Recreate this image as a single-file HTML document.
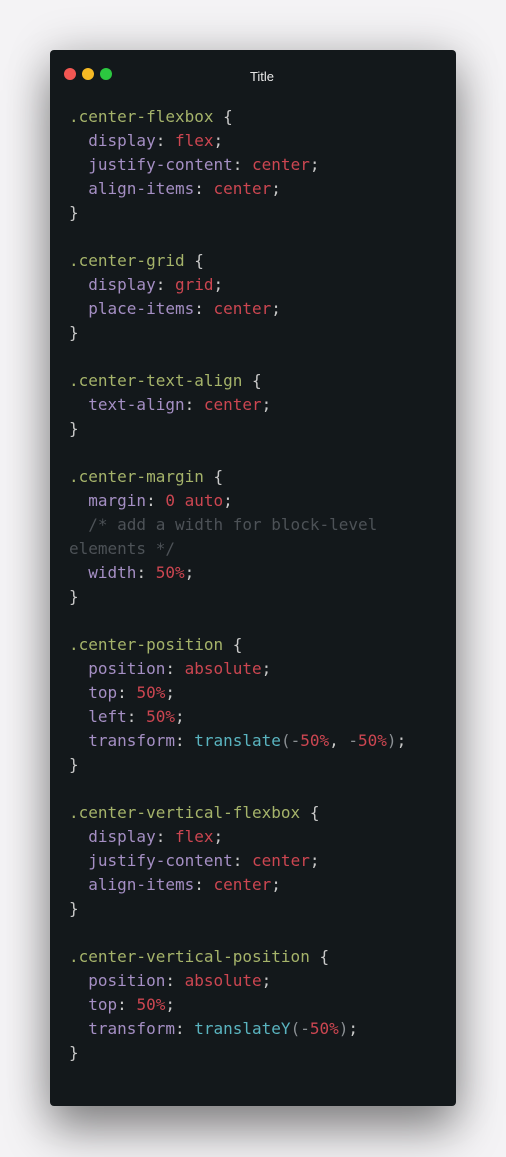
<!DOCTYPE html>
<html><head><meta charset="utf-8"><style>
html,body{margin:0;padding:0;}
body{width:506px;height:1157px;background:#f4f3f5;position:relative;overflow:hidden;}
.card{position:absolute;left:50px;top:50px;width:406px;height:1056px;background:#13181b;border-radius:4px;
box-shadow:0 25px 45px rgba(0,0,0,0.4),0 0 45px rgba(0,0,0,0.18);}
.dot{position:absolute;top:68px;width:12px;height:12px;border-radius:50%;}
.title{position:absolute;left:0;width:524px;top:69px;text-align:center;font:13px "Liberation Sans",sans-serif;color:#e8e8e8;}
pre{position:absolute;left:69px;top:105px;margin:0;font:16px/24px "DejaVu Sans Mono",monospace;color:#c9c9c9;white-space:pre;}
.s{color:#a5b36a}.p{color:#a58fc4}.v{color:#cc4651}.f{color:#5ab4c0}.c{color:#4d5257}.g{color:#8a8f93}
</style></head><body>
<div class="card"></div>
<div class="dot" style="left:64px;background:#f25753"></div>
<div class="dot" style="left:82px;background:#f6b924"></div>
<div class="dot" style="left:100px;background:#2cc840"></div>
<div class="title">Title</div>
<pre><span class="s">.center-flexbox</span> {
  <span class="p">display</span>: <span class="v">flex</span>;
  <span class="p">justify-content</span>: <span class="v">center</span>;
  <span class="p">align-items</span>: <span class="v">center</span>;
}

<span class="s">.center-grid</span> {
  <span class="p">display</span>: <span class="v">grid</span>;
  <span class="p">place-items</span>: <span class="v">center</span>;
}

<span class="s">.center-text-align</span> {
  <span class="p">text-align</span>: <span class="v">center</span>;
}

<span class="s">.center-margin</span> {
  <span class="p">margin</span>: <span class="v">0 auto</span>;
  <span class="c">/* add a width for block-level</span>
<span class="c">elements */</span>
  <span class="p">width</span>: <span class="v">50%</span>;
}

<span class="s">.center-position</span> {
  <span class="p">position</span>: <span class="v">absolute</span>;
  <span class="p">top</span>: <span class="v">50%</span>;
  <span class="p">left</span>: <span class="v">50%</span>;
  <span class="p">transform</span>: <span class="f">translate</span><span class="g">(-</span><span class="v">50%</span>, <span class="g">-</span><span class="v">50%</span><span class="g">)</span>;
}

<span class="s">.center-vertical-flexbox</span> {
  <span class="p">display</span>: <span class="v">flex</span>;
  <span class="p">justify-content</span>: <span class="v">center</span>;
  <span class="p">align-items</span>: <span class="v">center</span>;
}

<span class="s">.center-vertical-position</span> {
  <span class="p">position</span>: <span class="v">absolute</span>;
  <span class="p">top</span>: <span class="v">50%</span>;
  <span class="p">transform</span>: <span class="f">translateY</span><span class="g">(-</span><span class="v">50%</span><span class="g">)</span>;
}</pre>
</body></html>
